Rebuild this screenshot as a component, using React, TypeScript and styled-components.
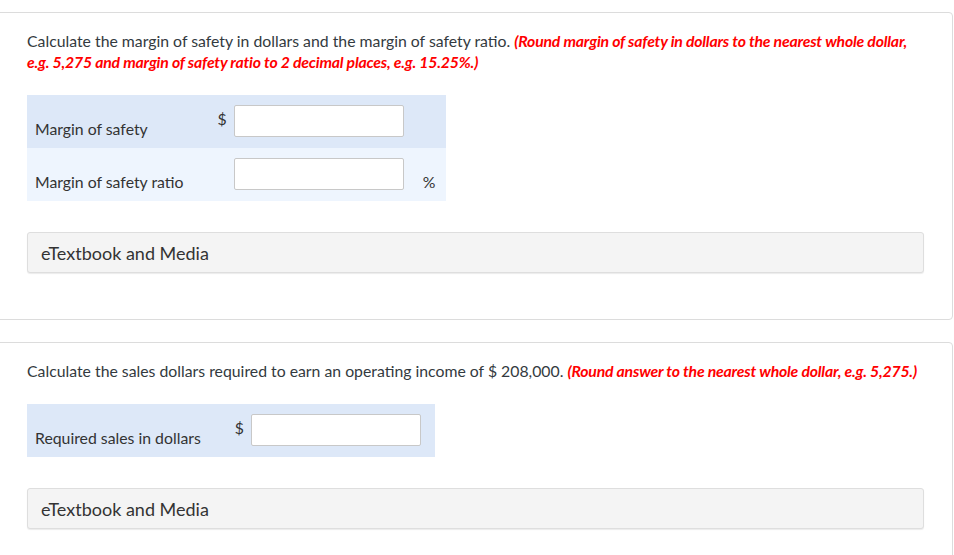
import React from 'react'
import styled, { createGlobalStyle } from 'styled-components'

const GlobalStyle = createGlobalStyle`
  html, body {
    margin: 0;
    padding: 0;
    background: #ffffff;
  }
  body {
    font-family: Lato, "Open Sans", Arial, sans-serif;
    color: #333333;
    overflow: hidden;
  }
`

const Page = styled.div`
  display: flex;
  flex-direction: column;
  gap: 22px;
  padding-top: 12px;
  width: 954px;
`

const Card = styled.section`
  margin: 0 1px 0 -6px;
  padding: 17px 28px 46px 32px;
  border: 1px solid #dcdcdc;
  border-radius: 4px;
  background: #ffffff;
`

const Question = styled.p`
  margin: 0 0 23px 0;
  font-size: 15.8px;
  line-height: 21px;
  color: #333a40;
`

const Hint = styled.span`
  color: #ff0000;
  font-weight: 700;
  font-style: italic;
  letter-spacing: -0.2px;
`

const Grid = styled.table`
  border-collapse: collapse;
  font-size: 15.8px;
  line-height: 20px;
  color: #333333;
`

const Row = styled.tr<{ $shade: 'dark' | 'light' }>`
  background: ${p => (p.$shade === 'dark' ? '#dde8f8' : '#eef5fe')};
  height: 53px;
`

const Label = styled.td`
  padding: 0 34px 9px 8px;
  vertical-align: bottom;
  white-space: nowrap;
`

const Sign = styled.td`
  padding: 0 7px 5px 0;
  vertical-align: middle;
  width: 9px;
`

const InputCell = styled.td`
  padding: 10px 14px 11px 0;
  vertical-align: top;
`

const Unit = styled.td`
  padding: 0 11px 9px 5px;
  vertical-align: bottom;
`

const Field = styled.input`
  display: block;
  box-sizing: border-box;
  width: 170px;
  height: 32px;
  border: 1px solid #c8c8c8;
  border-radius: 2px;
  background: #ffffff;
  outline: none;
`

const Media = styled.div`
  margin-top: 31px;
  height: 41px;
  box-sizing: border-box;
  display: flex;
  align-items: center;
  padding: 0 13px;
  background: #f4f4f4;
  border: 1px solid #dedede;
  border-radius: 3px;
  box-shadow: 0 1px 1px rgba(0, 0, 0, 0.08);
  font-size: 18px;
  color: #333333;
`

export default function App() {
  return (
    <>
      <GlobalStyle />
      <Page>
        <Card>
          <Question>
            Calculate the margin of safety in dollars and the margin of safety ratio.{' '}
            <Hint>
              (Round margin of safety in dollars to the nearest whole dollar, e.g. 5,275 and margin of
              safety ratio to 2 decimal places, e.g. 15.25%.)
            </Hint>
          </Question>
          <Grid>
            <tbody>
              <Row $shade="dark">
                <Label>Margin of safety</Label>
                <Sign>$</Sign>
                <InputCell><Field type="text" /></InputCell>
                <Unit></Unit>
              </Row>
              <Row $shade="light">
                <Label>Margin of safety ratio</Label>
                <Sign></Sign>
                <InputCell><Field type="text" /></InputCell>
                <Unit>%</Unit>
              </Row>
            </tbody>
          </Grid>
          <Media>eTextbook and Media</Media>
        </Card>
        <Card>
          <Question>
            Calculate the sales dollars required to earn an operating income of $ 208,000.{' '}
            <Hint>(Round answer to the nearest whole dollar, e.g. 5,275.)</Hint>
          </Question>
          <Grid>
            <tbody>
              <Row $shade="dark">
                <Label>Required sales in dollars</Label>
                <Sign>$</Sign>
                <InputCell><Field type="text" /></InputCell>
              </Row>
            </tbody>
          </Grid>
          <Media>eTextbook and Media</Media>
        </Card>
      </Page>
    </>
  )
}
